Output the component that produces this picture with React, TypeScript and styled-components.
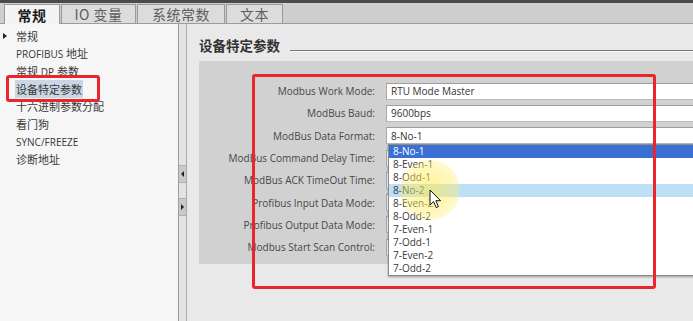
import { Fragment } from 'react';
import styled, { createGlobalStyle } from 'styled-components';

const GlobalStyle = createGlobalStyle`
	html, body {
		margin: 0;
		padding: 0;
	}
	body {
		width: 693px;
		height: 321px;
		overflow: hidden;
		background: #e9e9e9;
		font-family: 'Open Sans', 'Noto Sans CJK SC', sans-serif;
	}
`;

const Screen = styled.div`
	position: relative;
	width: 693px;
	height: 321px;
	display: flex;
	flex-direction: column;
	overflow: hidden;
`;

const TabBar = styled.div`
	height: 20px;
	border-top: 3px solid #4b4b4b;
	border-bottom: 1px solid #9c9c9c;
	background: #cecece;
	display: flex;
	align-items: flex-end;
	padding-left: 4px;
	gap: 1px;
`;

const Tab = styled.div<{ $active?: boolean; $width: number }>`
	box-sizing: border-box;
	width: ${(p) => p.$width}px;
	height: ${(p) => (p.$active ? 20 : 19)}px;
	margin-bottom: ${(p) => (p.$active ? -1 : 0)}px;
	border: 1px solid #9a9a9a;
	border-bottom: none;
	background: ${(p) => (p.$active ? '#f4f4f4' : '#dcdcdc')};
	color: ${(p) => (p.$active ? '#1c1c1c' : '#5e5e5e')};
	font-family: 'Noto Sans CJK SC', sans-serif;
	font-weight: ${(p) => (p.$active ? 700 : 400)};
	font-size: 14px;
	line-height: 1;
	display: flex;
	align-items: center;
	justify-content: center;
	letter-spacing: 0.5px;
`;

const Body = styled.div`
	flex: 1;
	display: flex;
	min-height: 0;
`;

const Sidebar = styled.div`
	width: 179px;
	box-sizing: border-box;
	padding-top: 3px;
	background: #f6f6f6;
	border-right: 1px solid #9d9d9d;
	display: flex;
	flex-direction: column;
`;

const NavItem = styled.div`
	height: 17.6px;
	display: flex;
	align-items: center;
	padding-left: 3px;
	font-size: 11px;
	color: #383838;
	white-space: nowrap;
`;

const Marker = styled.span<{ $open?: boolean }>`
	width: 12px;
	display: flex;
	align-items: center;
	&::before {
		content: '';
		display: ${(p) => (p.$open ? 'block' : 'none')};
		border-left: 4px solid #222;
		border-top: 3.5px solid transparent;
		border-bottom: 3.5px solid transparent;
	}
`;

const NavLabel = styled.span<{ $selected?: boolean }>`
	padding: 1px 1px;
	background: ${(p) => (p.$selected ? '#cad6e4' : 'transparent')};
`;

const Latin = styled.span`
	font-size: 10px;
`;

const SplitStrip = styled.div`
	width: 7px;
	background: #e3e3e3;
	border-right: 1px solid #a9a9a9;
	display: flex;
	flex-direction: column;
	padding-top: 141px;
	gap: 15px;
`;

const CollapseButton = styled.div<{ $dir: 'left' | 'right' }>`
	height: 16px;
	background: #c9c9c9;
	border-top: 1px solid #b0b0b0;
	border-bottom: 1px solid #b0b0b0;
	display: flex;
	align-items: center;
	justify-content: center;
	&::before {
		content: '';
		border-top: 3px solid transparent;
		border-bottom: 3px solid transparent;
		${(p) =>
			p.$dir === 'left'
				? 'border-right: 3px solid #222;'
				: 'border-left: 3px solid #222;'}
	}
`;

const Main = styled.div`
	flex: 1;
	background: #e9e9e9;
	padding: 13px 0 0 12px;
	min-width: 0;
`;

const HeaderRow = styled.div`
	display: flex;
	align-items: flex-end;
	gap: 10px;
	height: 16px;
`;

const Title = styled.div`
	font-family: 'Noto Sans CJK SC', sans-serif;
	font-size: 13.5px;
	font-weight: 700;
	line-height: 16px;
	color: #333;
	white-space: nowrap;
`;

const HeaderLine = styled.div`
	flex: 1;
	height: 1px;
	margin-bottom: 2px;
	background: #767676;
	box-shadow: 0 1px 0 #f7f7f7;
`;

const Panel = styled.div`
	margin-top: 8px;
	background: #d1d1d1;
	padding: 19px 0 6px 0;
	display: grid;
	grid-template-columns: 176px 1fr;
	grid-auto-rows: 22.3px;
	column-gap: 11px;
`;

const Label = styled.div`
	align-self: center;
	text-align: right;
	font-size: 10px;
	color: #474747;
	white-space: nowrap;
`;

const Field = styled.div`
	position: relative;
	align-self: center;
	height: 17px;
	box-sizing: border-box;
	background: #fff;
	border-top: 1px solid #9e9e9e;
	border-bottom: 1px solid #b9b9b9;
	border-left: 1px solid #a9a9a9;
	padding-left: 4px;
	display: flex;
	align-items: center;
	font-size: 10px;
	color: #333;
	white-space: nowrap;
`;

const DropList = styled.div`
	position: absolute;
	top: calc(100% + 1px);
	left: 1px;
	width: 330px;
	background: #fff;
	border: 1px solid #8c8c8c;
	box-shadow: 0 1px 2px rgba(0, 0, 0, 0.35);
	z-index: 2;
`;

const DropItem = styled.div<{ $state?: 'selected' | 'hover' }>`
	height: 13px;
	line-height: 13px;
	padding-left: 4px;
	font-size: 10px;
	color: ${(p) => (p.$state === 'selected' ? '#fff' : '#3a3a3a')};
	background: ${(p) =>
		p.$state === 'selected' ? '#3a6fd4' : p.$state === 'hover' ? '#bde0f6' : 'transparent'};
`;

const Annotation = styled.div<{ $x: number; $y: number; $w: number; $h: number }>`
	position: absolute;
	left: ${(p) => p.$x}px;
	top: ${(p) => p.$y}px;
	width: ${(p) => p.$w}px;
	height: ${(p) => p.$h}px;
	box-sizing: border-box;
	border: 3px solid #e8262b;
	border-radius: 3px;
	pointer-events: none;
	z-index: 5;
`;

const Halo = styled.div`
	position: absolute;
	left: 400px;
	top: 160px;
	width: 60px;
	height: 60px;
	border-radius: 50%;
	background: radial-gradient(
		circle,
		rgba(255, 234, 80, 0.6) 0%,
		rgba(255, 238, 110, 0.45) 55%,
		rgba(255, 246, 160, 0) 100%
	);
	pointer-events: none;
	z-index: 4;
`;

const Pointer = styled.svg`
	position: absolute;
	left: 429px;
	top: 189px;
	z-index: 6;
`;

const navItems = [
	{ label: '常规', open: true },
	{ label: <><Latin>PROFIBUS</Latin> 地址</> },
	{ label: <>常规 <Latin>DP</Latin> 参数</> },
	{ label: '设备特定参数', selected: true },
	{ label: '十六进制参数分配' },
	{ label: '看门狗' },
	{ label: <Latin>SYNC/FREEZE</Latin> },
	{ label: '诊断地址' },
];

const rows = [
	{ label: 'Modbus Work Mode:', value: 'RTU Mode Master' },
	{ label: 'ModBus Baud:', value: '9600bps' },
	{ label: 'ModBus Data Format:', value: '8-No-1', open: true },
	{ label: 'ModBus Command Delay Time:', value: '' },
	{ label: 'ModBus ACK TimeOut Time:', value: '' },
	{ label: 'Profibus Input Data Mode:', value: '' },
	{ label: 'Profibus Output Data Mode:', value: '' },
	{ label: 'Modbus Start Scan Control:', value: '' },
];

const formats = [
	'8-No-1',
	'8-Even-1',
	'8-Odd-1',
	'8-No-2',
	'8-Even-2',
	'8-Odd-2',
	'7-Even-1',
	'7-Odd-1',
	'7-Even-2',
	'7-Odd-2',
];

const tabs = [
	{ label: '常规', width: 56, active: true },
	{ label: 'IO 变量', width: 75 },
	{ label: '系统常数', width: 88 },
	{ label: '文本', width: 57 },
];

export default function App() {
	return (
		<Screen>
			<GlobalStyle />
			<TabBar>
				{tabs.map((t) => (
					<Tab key={t.label} $active={t.active} $width={t.width}>
						{t.label}
					</Tab>
				))}
			</TabBar>
			<Body>
				<Sidebar>
					{navItems.map((item, i) => (
						<NavItem key={i}>
							<Marker $open={item.open} />
							<NavLabel $selected={item.selected}>{item.label}</NavLabel>
						</NavItem>
					))}
				</Sidebar>
				<SplitStrip>
					<CollapseButton $dir="left" />
					<CollapseButton $dir="right" />
				</SplitStrip>
				<Main>
					<HeaderRow>
						<Title>设备特定参数</Title>
						<HeaderLine />
					</HeaderRow>
					<Panel>
						{rows.map((r) => (
							<Fragment key={r.label}>
								<Label>{r.label}</Label>
								<Field>
									{r.value}
									{r.open && (
										<DropList>
											{formats.map((f, i) => (
												<DropItem
													key={f}
													$state={i === 0 ? 'selected' : i === 3 ? 'hover' : undefined}
												>
													{f}
												</DropItem>
											))}
										</DropList>
									)}
								</Field>
							</Fragment>
						))}
					</Panel>
				</Main>
			</Body>
			<Annotation $x={6} $y={75} $w={94} $h={27} />
			<Annotation $x={252} $y={74} $w={404} $h={215} />
			<Halo />
			<Pointer width="13" height="20" viewBox="0 0 13 20">
				<path
					d="M1 1 L1 16 L4.6 12.6 L7.2 18.6 L9.4 17.6 L6.9 11.7 L11.6 11.7 Z"
					fill="#fff"
					stroke="#111"
					strokeWidth="1"
					strokeLinejoin="round"
				/>
			</Pointer>
		</Screen>
	);
}
